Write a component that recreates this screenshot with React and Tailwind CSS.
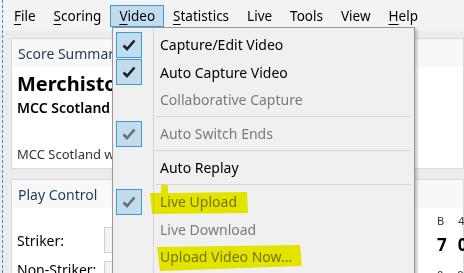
import React from "react"

const font = { fontFamily: '"Noto Sans", "Open Sans", sans-serif' }

const Check = ({ disabled }) => (
    <svg width="14" height="12" viewBox="0 0 14 12">
        <path d="M1.5 6.5 L5 10 L12.5 1.5" fill="none" stroke={disabled ? "#6e6e6e" : "#222"} strokeWidth="2.6" strokeLinejoin="miter" />
    </svg>
)

const menus = [
    { label: "File", key: 0 },
    { label: "Scoring", key: 0 },
    { label: "Video", key: 0, open: true },
    { label: "Statistics", key: 0 },
    { label: "Live" },
    { label: "Tools" },
    { label: "View" },
    { label: "Help", key: 0 },
]

const items = [
    { label: "Capture/Edit Video", checked: true },
    { label: "Auto Capture Video", checked: true },
    { label: "Collaborative Capture", disabled: true },
    { sep: true },
    { label: "Auto Switch Ends", checked: true, disabled: true },
    { sep: true },
    { label: "Auto Replay" },
    { sep: true },
    { label: "Live Upload", checked: true, disabled: true },
    { label: "Live Download", disabled: true },
    { label: "Upload Video Now...", disabled: true },
]

const MenuLabel = ({ label, accessKey }) => {
    if (accessKey === undefined) return label
    return (
        <>
            <span className="underline underline-offset-[3px] decoration-1">{label[0]}</span>
            {label.slice(1)}
        </>
    )
}

const VideoMenu = () => (
    <div className="absolute left-[112px] top-[27px] w-[303px] h-[260px] bg-[#f0f0f0] border border-[#979797] shadow-[2px_2px_3px_rgba(0,0,0,0.25)] pt-[3px] pl-[3px]">
        {/* gutter line */}
        <div className="absolute left-[40px] top-0 bottom-0 w-px bg-[#d7d7d7]" />
        {items.map((it, i) =>
            it.sep ? (
                <div key={i} className="h-[6.5px] flex items-center pl-[40px] pr-[3px]">
                    <div className="h-px w-full bg-[#d5d5d5]" />
                </div>
            ) : (
                <div key={i} className="h-[27.5px] flex items-center">
                    <div className="w-[26px] h-[26px] flex items-center justify-center">
                        {it.checked && (
                            <div className="w-[26px] h-[26px] bg-[#c1dcee] border border-[#3d9ad6] flex items-center justify-center">
                                <Check disabled={it.disabled} />
                            </div>
                        )}
                    </div>
                    <div className={`ml-[18px] text-[14px] ${it.disabled ? "text-[#7a7a7a]" : "text-black"}`}>{it.label}</div>
                </div>
            )
        )}
    </div>
)

const Highlights = () => (
    <svg className="absolute left-0 top-0 pointer-events-none mix-blend-multiply" width="464" height="273">
        <polygon points="150,193 161,193 161,185 168,185 168,193 247,192 248,213 152,214" fill="#f2f200" />
        <polygon points="157,247 300,245 302,266 160,271" fill="#f2f200" />
    </svg>
)

const App = () => {
    return (
        <div className="relative w-[464px] h-[273px] overflow-hidden bg-[#ececec]" style={font}>
            {/* dashed marker line */}
            <div className="absolute left-[2px] top-0 bottom-0 border-l border-dashed border-[#2b8ee8]" />

            <div className="h-[31px] bg-[#f3f3f3] flex items-start pl-[5px] pt-[5px] text-[13.5px] text-black">
                {menus.map(m => (
                    <div key={m.label}
                        className={`h-[22px] px-[8px] flex items-center border ${m.open ? "bg-[#c1dcee] border-[#3d9ad6]" : "border-transparent"}`}>
                        <MenuLabel label={m.label} accessKey={m.key} />
                    </div>
                ))}
            </div>

            <div className="pl-[11px] pt-[7px] flex flex-col gap-[10px]">
                <div className="bg-white border border-[#dadada] h-[131px]">
                    <div className="h-[28px] bg-[#f8f8f8] flex items-center px-[6px] text-[14px] text-[#1e3a5a]">Score Summary</div>
                    <div className="px-[5px] pt-[4px] w-[100px]">
                        <div className="text-[20px] font-bold text-black leading-[26px] whitespace-nowrap">Merchiston</div>
                        <div className="text-[14px] font-semibold text-black leading-[20px] mt-[1px] whitespace-nowrap">MCC Scotland</div>
                        <div className="text-[13px] text-[#333] mt-[27px] whitespace-nowrap">MCC Scotland won</div>
                    </div>
                </div>

                <div className="bg-white border border-[#dadada] h-[120px]">
                    <div className="h-[28px] bg-[#f8f8f8] flex items-center px-[6px] text-[14px] text-[#1e3a5a]">Play Control</div>
                    <div className="flex">
                        <div className="flex flex-col pt-[19px] pl-[5px] gap-[8px]">
                            <div className="flex items-center">
                                <div className="w-[87px] text-[14px] text-black">Striker:</div>
                                <div className="w-[80px] h-[26px] border border-[#d0d0d0] bg-[#f4f4f4]" />
                            </div>
                            <div className="flex items-start h-[20px]">
                                <div className="w-[87px] text-[14px] leading-[18px] text-black">Non-Striker:</div>
                                <div className="w-[80px] h-[26px] border border-[#d0d0d0] bg-[#f4f4f4]" />
                            </div>
                        </div>
                        <div className="ml-auto mr-[-14px] pt-[5px] flex flex-col w-[40px]">
                            <div className="flex gap-[14px] text-[11px] text-[#333]"><span>B</span><span>4</span></div>
                            <div className="flex gap-[11px] text-[17px] font-bold text-black mt-[2px]"><span>7</span><span>0</span></div>
                            <div className="flex gap-[14px] text-[11px] text-[#333] mt-[10px]"><span>0</span><span>0</span></div>
                        </div>
                    </div>
                </div>
            </div>

            <VideoMenu />
            <Highlights />
        </div>
    )
}

export default App
